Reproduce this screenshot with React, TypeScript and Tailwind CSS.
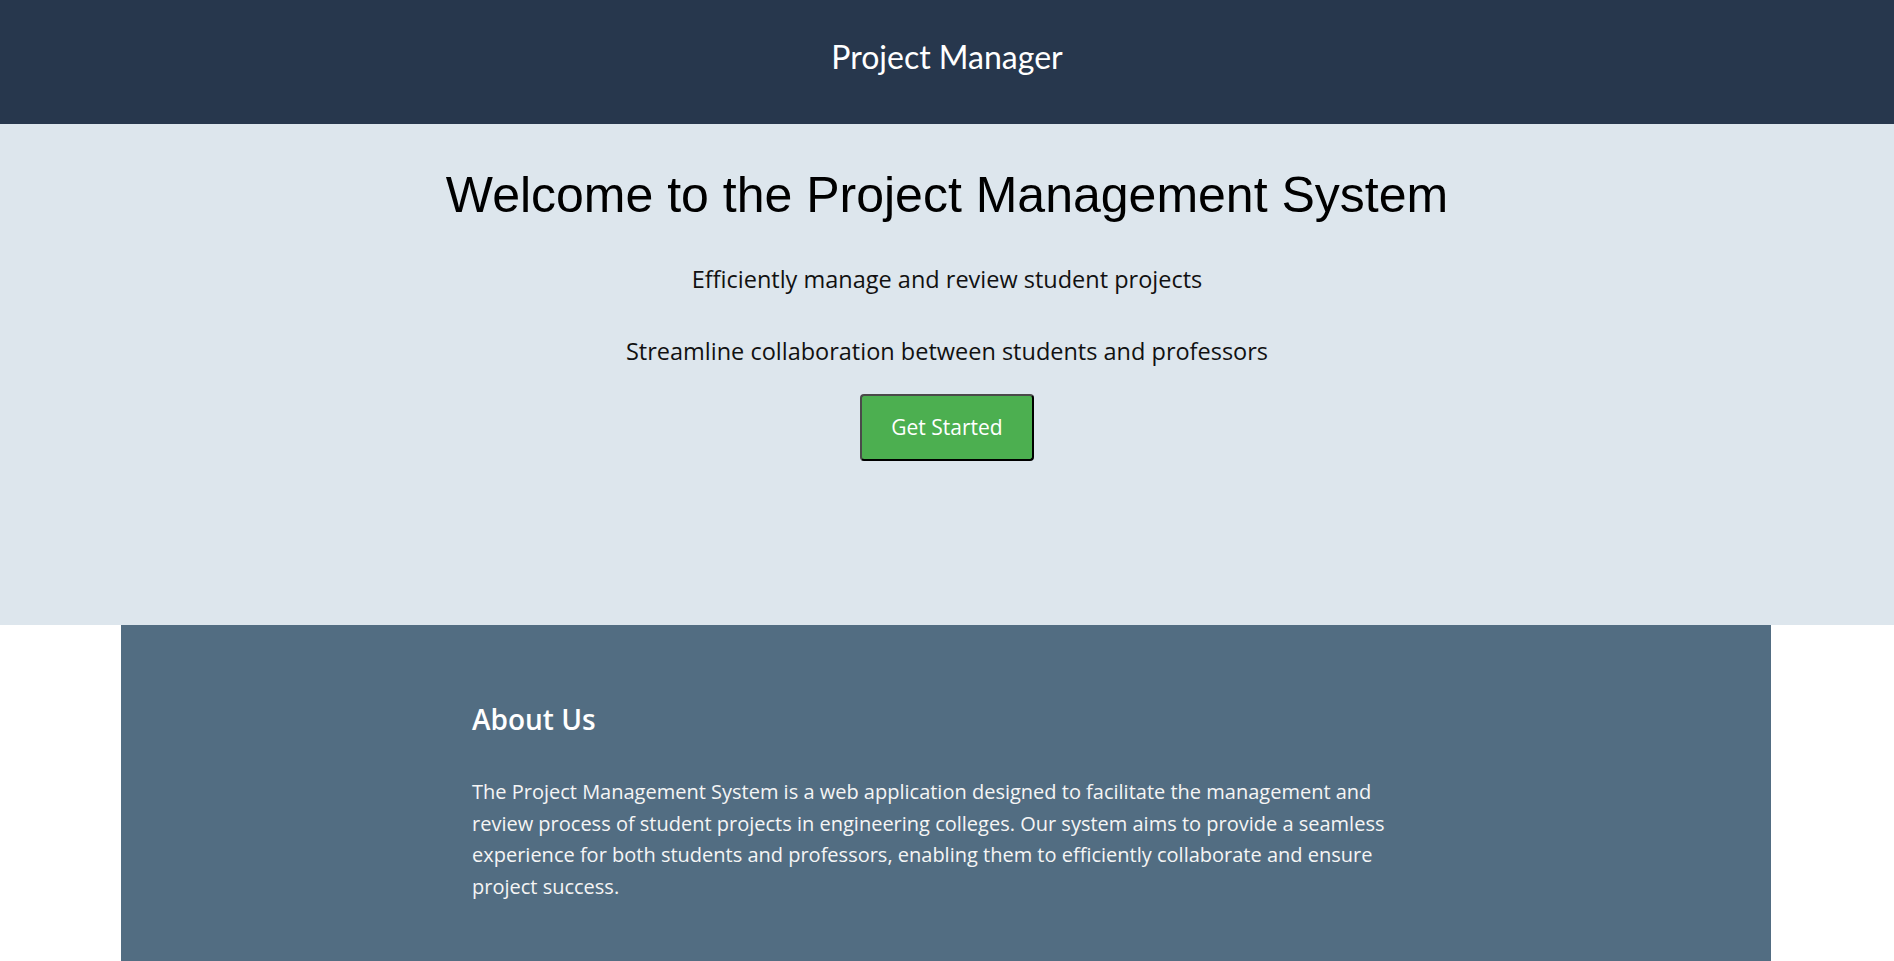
export default function App() {
  return (
    <div className="min-h-screen w-full bg-white">
      <header className="h-[124px] bg-[#27374D] pt-[37px] text-center">
        <h1
          className="text-[32px] leading-[40px] text-white"
          style={{ fontFamily: '"Lato", "Open Sans", sans-serif' }}
        >
          Project Manager
        </h1>
      </header>

      <section className="flex h-[501px] flex-col items-center bg-[#DDE6ED] pt-[46px]">
        <h2
          className="text-[50px] leading-[50px] text-black"
          style={{ fontFamily: '"Liberation Sans", Arial, sans-serif' }}
        >
          Welcome to the Project Management System
        </h2>
        <p
          className="mt-[43.5px] text-[23.5px] leading-[30px] text-[#111]"
          style={{ fontFamily: '"Open Sans", "Noto Sans", sans-serif' }}
        >
          Efficiently manage and review student projects
        </p>
        <p
          className="mt-[42px] text-[23.5px] leading-[30px] text-[#111]"
          style={{ fontFamily: '"Open Sans", "Noto Sans", sans-serif' }}
        >
          Streamline collaboration between students and professors
        </p>
        <button
          className="mt-[28.5px] flex h-[67px] w-[174px] items-center justify-center rounded-[4px] border-2 border-t-[#4a4a4a] border-l-[#4a4a4a] border-b-black border-r-black bg-[#4CAF50] text-[21px] text-white"
          style={{ fontFamily: '"Open Sans", "Noto Sans", sans-serif' }}
        >
          Get Started
        </button>
      </section>

      <section className="ml-[121px] h-[336px] w-[1650px] bg-[#526D82] pl-[351px] pt-[77px]">
        <div
          className="w-[945px]"
          style={{ fontFamily: '"Open Sans", "Noto Sans", sans-serif' }}
        >
          <h3 className="text-[28px] font-semibold leading-[34px] text-white">About Us</h3>
          <p className="mt-[40px] text-[20px] leading-[31.5px] text-[#f5f5f5]">
            The Project Management System is a web application designed to facilitate the management and
            review process of student projects in engineering colleges. Our system aims to provide a seamless
            experience for both students and professors, enabling them to efficiently collaborate and ensure
            project success.
          </p>
        </div>
      </section>
    </div>
  );
}
